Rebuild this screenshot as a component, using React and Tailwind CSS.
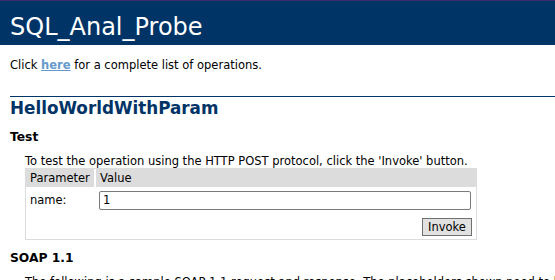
export default function App() {
  return (
    <div className="w-[555px] h-[280px] overflow-hidden bg-white text-black font-['DejaVu_Sans',Verdana,sans-serif] text-[11.5px]">
      <div className="h-px bg-[#3a2a6e]" />
      <div className="h-[44px] bg-[#003366] pl-[10px] pt-[11px] text-white text-[24px] leading-[30px]">
        SQL_Anal_Probe
      </div>
      <div className="pl-[10px]">
        <p className="mt-[13px] leading-[14px]">
          Click <a className="text-[#6699cc] font-bold underline">here</a> for a complete list of operations.
        </p>
        <h2 className="mt-[24px] border-t border-[#003366] text-[#003366] font-bold text-[16.8px] leading-[22px]">
          HelloWorldWithParam
        </h2>
        <h3 className="mt-[11px] font-bold text-[12.3px] leading-[15px]">Test</h3>
        <div className="pl-[15px] mt-[10px]">
          <p className="leading-[13px]">To test the operation using the HTTP POST protocol, click the 'Invoke' button.</p>
          <div className="w-[452px] border border-[#dcdcdc]">
            <div className="flex h-[18px] gap-[2px]">
              <div className="w-[68px] bg-[#dcdcdc] pl-[4px] leading-[18px]">Parameter</div>
              <div className="flex-1 bg-[#dcdcdc] pl-[4px] leading-[18px]">Value</div>
            </div>
            <div className="flex items-center pt-[4px]">
              <div className="w-[73px] pl-[4px]">name:</div>
              <div className="w-[372px] h-[19px] border border-[#7a7a7a] rounded-[2px] pl-[3px] leading-[17px]">1</div>
            </div>
            <div className="flex justify-end pr-[4px] mt-[8px] mb-[3px]">
              <button className="w-[50px] h-[18px] bg-[#e1e1e1] border border-[#707070] leading-[16px] text-[11.5px] text-center">Invoke</button>
            </div>
          </div>
        </div>
        <h3 className="mt-[11px] font-bold text-[12.3px] leading-[15px]">SOAP 1.1</h3>
        <p className="pl-[15px] mt-[9px] leading-[14px] whitespace-nowrap">
          The following is a sample SOAP 1.1 request and response.  The placeholders shown need to be replaced with actual values.
        </p>
      </div>
    </div>
  );
}
